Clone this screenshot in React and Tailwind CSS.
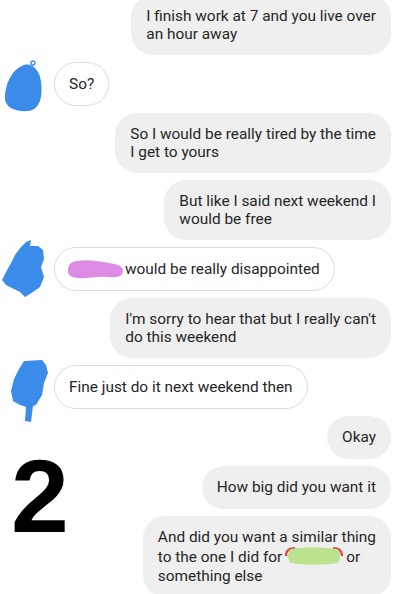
import React from 'react';

const BLUE = '#3b8be8';

const Blob = ({ kind }) => {
  // svg box: page x, y measured from 10px above the row
  return (
    <svg className="absolute left-0 top-[-10px]" width="54" height="72" viewBox="0 0 54 72">
      {kind === 1 && (
        <g fill={BLUE}>
          <path d="M22 14 C30 9 40 17 41 30 C43 44 40 58 28 59 C16 60 5 56 5 46 C5 32 12 18 22 14 Z" />
          <circle cx="33" cy="11" r="2" fill="none" stroke={BLUE} strokeWidth="1.3" />
        </g>
      )}
      {kind === 2 && (
        <path
          fill={BLUE}
          d="M26 5 L31 3 L30 9 L38 9 L43 13 L44 22 L41 30 L44 40 L40 50 L33 55 L25 60 L20 55 L14 52 L6 48 L2 43 L6 35 L11 26 L15 18 L21 10 Z"
        />
      )}
      {kind === 3 && (
        <path
          fill={BLUE}
          d="M24 6 L42 5 L46 10 L48 18 L44 28 L42 40 L36 50 L33 51 L31 67 L25 66 L26 52 L20 50 L13 46 L11 36 L14 24 L19 14 Z"
        />
      )}
    </svg>
  );
};

const Mine = ({ lines }) => (
  <div className="flex justify-end pr-[13px]">
    <div className="bg-[#efefef] rounded-[22px] px-[15px] py-[11.5px] min-h-[43px] flex flex-col justify-center">
      {lines.map((l, i) => (
        <div key={i} className="whitespace-nowrap">{l}</div>
      ))}
    </div>
  </div>
);

const Theirs = ({ blob, children }) => (
  <div className="flex items-center">
    <div className="relative w-[54px] self-stretch shrink-0">
      <Blob kind={blob} />
    </div>
    <div className="bg-white border border-[#dcdcdc] rounded-[22px] px-[14px] h-[44px] flex items-center whitespace-nowrap">
      {children}
    </div>
  </div>
);

const NameScribble = () => (
  <svg width="62" height="20" viewBox="0 0 62 20" className="inline-block align-[-4px] mx-[1px]">
    <path d="M3 10 C3 3 8 2 12 2" fill="none" stroke="#e0413a" strokeWidth="2.2" />
    <path d="M50 2 C55 2 59 4 59 10" fill="none" stroke="#e0413a" strokeWidth="2.2" />
    <path
      fill="#b9e38f"
      d="M8 3 C20 1 42 1 54 3 C58 5 58 15 54 17 C42 19 20 19 8 17 C4 15 4 5 8 3 Z"
    />
  </svg>
);

export default function App() {
  return (
    <div
      className="relative w-[404px] h-[594px] overflow-hidden bg-white text-[15.4px] leading-[18.5px] text-[#262626]"
      style={{ fontFamily: 'Roboto, "Liberation Sans", sans-serif' }}
    >
      <div className="flex flex-col gap-[7px] mt-[-5px]">
        <Mine lines={['I finish work at 7 and you live over', 'an hour away']} />
        <Theirs blob={1}>So?</Theirs>
        <Mine lines={['So I would be really tired by the time', 'I get to yours']} />
        <Mine lines={['But like I said next weekend I', 'would be free']} />
        <Theirs blob={2}>
          <svg width="57" height="22" viewBox="0 0 57 22" className="mr-[1px] -ml-[2px]">
            <path
              fill="#dd8ce6"
              d="M9 3 C20 1 32 3 42 5 C50 6 56 8 56 13 C56 19 48 20 40 19 C30 18 20 21 10 20 C3 19 0 16 1 11 C2 6 4 4 9 3 Z"
            />
          </svg>
          would be really disappointed
        </Theirs>
        <Mine lines={["I'm sorry to hear that but I really can't", 'do this weekend']} />
        <Theirs blob={3}>Fine just do it next weekend then</Theirs>
        <Mine lines={['Okay']} />
        <Mine lines={['How big did you want it']} />
        <Mine
          lines={[
            'And did you want a similar thing',
            <span key="x">
              to the one I did for
              <NameScribble />
              or
            </span>,
            'something else',
          ]}
        />
      </div>

      <div
        className="absolute left-[11px] top-[444px] text-[104px] font-bold text-black leading-none"
        style={{ fontFamily: '"Liberation Sans", Arial, sans-serif' }}
      >
        2
      </div>
    </div>
  );
}
